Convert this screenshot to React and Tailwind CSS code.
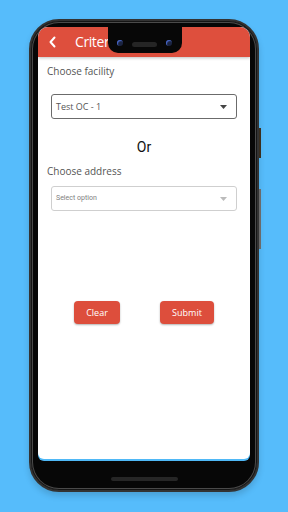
import React from "react";

export default function App() {
  return (
    <div className="w-[288px] h-[512px] bg-[#56bcfb] pt-[19px] pl-[29px] overflow-hidden" style={{ fontFamily: '"Open Sans", sans-serif' }}>
      <div className="relative w-[230px] h-[473px] rounded-[30px] bg-[#070707] border-2 border-[#333333] shadow-[inset_0_0_0_1px_#151515,inset_0_0_0_2px_#4a4a4a,0_4px_6px_rgba(0,0,0,0.15)] pt-[6px] px-[7px] flex flex-col">
        {/* screen */}
        <div className="w-[212px] h-[434px] rounded-t-[10px] rounded-b-[6px] overflow-hidden bg-[#4fb8f6] flex flex-col">
          <div className="h-[432px] bg-white rounded-b-[6px] flex flex-col">
            {/* header */}
            <div className="h-[30px] shrink-0 bg-[#de4f3d] flex items-center pl-[10px] shadow-[0_1px_3px_rgba(0,0,0,0.25)]">
              <svg width="10" height="12" viewBox="0 0 10 12" fill="none">
                <path d="M6.5 1.5 L2.5 6 L6.5 10.5" stroke="white" strokeWidth="2" strokeLinecap="round" strokeLinejoin="round" />
              </svg>
              <span className="ml-[17px] text-[14px] leading-[20px] tracking-[-0.4px] text-white">Criteria</span>
            </div>
            {/* content */}
            <div className="flex flex-col px-[9px]">
              <div className="mt-[7px] text-[10px] leading-[14px] text-[#555555]">Choose facility</div>
              <div className="mt-[16px] mx-[4px] h-[25px] border border-[#6b6b6b] rounded-[3px] flex items-center justify-between pl-[4px] pr-[9px]">
                <span className="text-[9px] text-[#555555]">Test OC - 1</span>
                <svg width="7" height="4" viewBox="0 0 7 4"><path d="M0 0 L7 0 L3.5 4 Z" fill="#444" /></svg>
              </div>
              <div className="mt-[18px] text-center text-[14px] leading-[20px] text-[#111111]" style={{ fontFamily: 'Roboto, sans-serif' }}>Or</div>
              <div className="mt-[7px] text-[10px] leading-[14px] text-[#555555]">Choose address</div>
              <div className="mt-[8px] mx-[4px] h-[25px] border border-[#cfcfcf] rounded-[3px] flex items-center justify-between pl-[4px] pr-[9px]">
                <span className="text-[7px] text-[#808080]" style={{ fontFamily: 'Roboto, sans-serif' }}>Select option</span>
                <svg width="7" height="4" viewBox="0 0 7 4"><path d="M0 0 L7 0 L3.5 4 Z" fill="#bbb" /></svg>
              </div>
              <div className="mt-[90px] flex pl-[27px] gap-[40px]">
                <div className="w-[46px] h-[23px] rounded-[4px] bg-[#dd4e3c] shadow-[0_1px_2px_rgba(0,0,0,0.3)] flex items-center justify-center text-[9px] text-white">Clear</div>
                <div className="w-[54px] h-[23px] rounded-[4px] bg-[#dd4e3c] shadow-[0_1px_2px_rgba(0,0,0,0.3)] flex items-center justify-center text-[9px] text-white">Submit</div>
              </div>
            </div>
          </div>
        </div>
        {/* home bar */}
        <div className="mt-[16px] mx-auto w-[67px] h-[4px] rounded-full bg-[#262626]" />

        {/* notch */}
        <div className="absolute left-[77px] top-[6px] w-[74px] h-[26px] bg-[#070707] rounded-b-[10px]">
          <div className="absolute left-[9px] top-[13px] w-[6px] h-[6px] rounded-full bg-[#1b2440] shadow-[inset_1px_1px_1px_#4a6ad0]" />
          <div className="absolute left-[58px] top-[13px] w-[6px] h-[6px] rounded-full bg-[#1b2440] shadow-[inset_1px_1px_1px_#4a6ad0]" />
          <div className="absolute left-[24px] top-[15px] w-[25px] h-[5px] rounded-full bg-[#252525]" />
        </div>
        {/* side buttons */}
        <div className="absolute right-[-4px] top-[107px] w-[2px] h-[30px] bg-[#3a2e1e]" />
        <div className="absolute right-[-4px] top-[168px] w-[2px] h-[60px] bg-[#6a6a6a]" />
      </div>
    </div>
  );
}
